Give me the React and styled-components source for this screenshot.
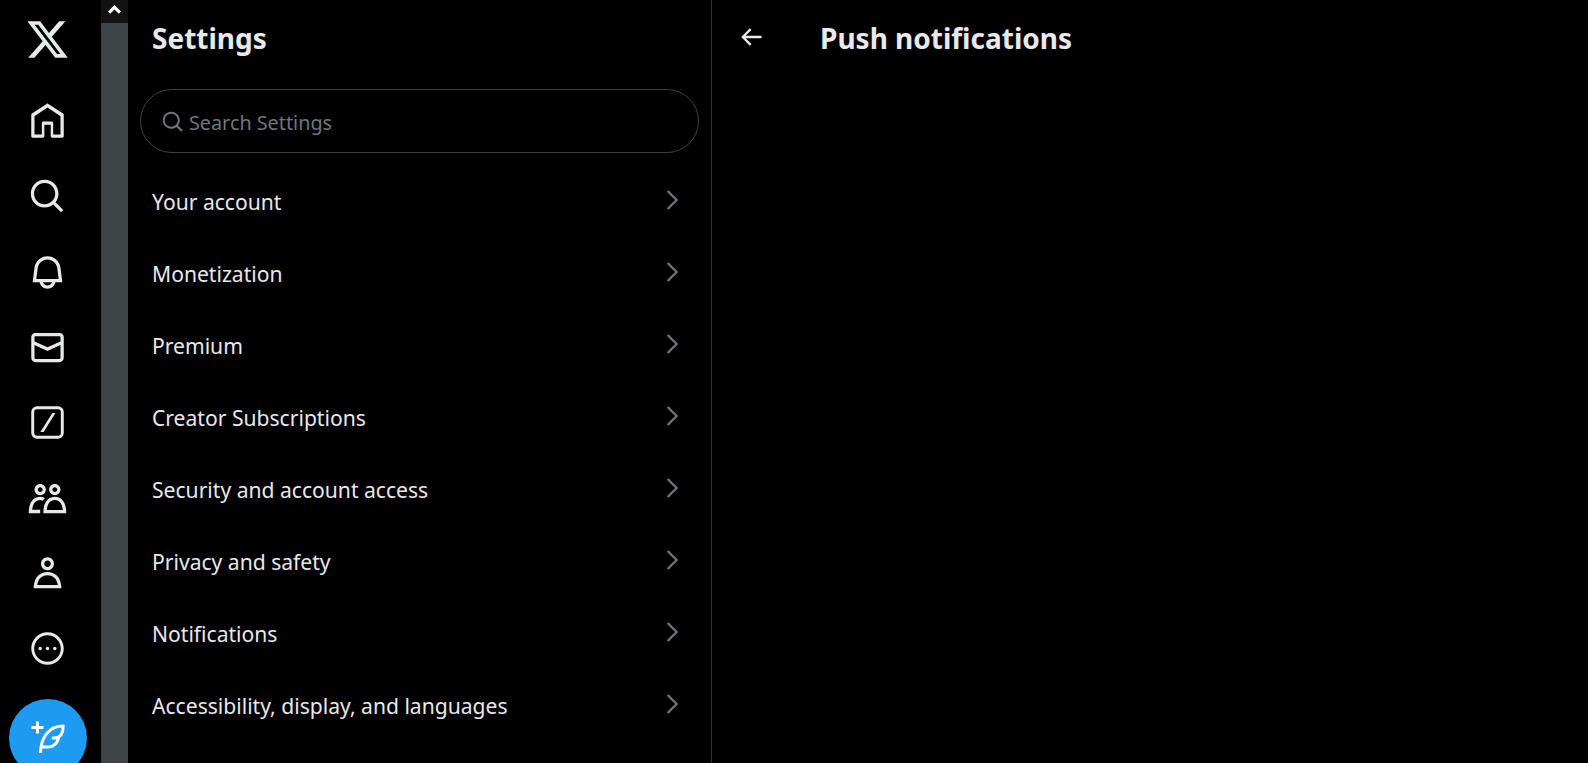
import React from "react";
import styled, { createGlobalStyle } from "styled-components";

const GlobalStyle = createGlobalStyle`
  html, body {
    margin: 0;
    height: 100%;
    background: #000;
    overflow: hidden;
  }
  #root {
    height: 100%;
  }
`;

const fontStack = `"Noto Sans", "Open Sans", "Liberation Sans", sans-serif`;

const Page = styled.div`
  display: flex;
  height: 763px;
  overflow: hidden;
  background: #000;
  color: #e7e9ea;
  font-family: ${fontStack};
`;

const Nav = styled.nav`
  flex: 0 0 95px;
  padding-right: 6px;
  display: flex;
  flex-direction: column;
  align-items: center;
`;

const LogoLink = styled.a`
  flex: 0 0 78px;
  display: flex;
  align-items: center;
  justify-content: center;
  margin-bottom: 6px;
`;

const NavLink = styled.a`
  flex: 0 0 75.3px;
  display: flex;
  align-items: center;
  justify-content: center;
`;

const PostButton = styled.a`
  flex: 0 0 78px;
  width: 78px;
  margin-top: 13px;
  border-radius: 50%;
  background: #1d9bf0;
  display: flex;
  align-items: center;
  justify-content: center;
`;

const Scrollbar = styled.div`
  flex: 0 0 27px;
  background: #3f4447;
`;

const ScrollUp = styled.div`
  height: 23px;
  padding-bottom: 4px;
  box-sizing: border-box;
  background: #121212;
  display: flex;
  align-items: center;
  justify-content: center;
`;

const SettingsColumn = styled.section`
  flex: 0 0 583px;
  border-right: 1px solid #2f3336;
`;

const Header = styled.header`
  height: 78px;
  display: flex;
  align-items: center;
  padding-left: ${(p) => p.$left || 24}px;
`;

const Title = styled.h2`
  margin: 0 0 2px;
  font-size: 28px;
  font-weight: 700;
  line-height: 76px;
`;

const SearchBox = styled.div`
  height: 64px;
  box-sizing: border-box;
  margin: 11px 12px 12px;
  border: 1px solid #3e4144;
  border-radius: 32px;
  display: flex;
  align-items: center;
  gap: 4px;
  padding: 2px 0 0 20px;
  color: #71767b;
  font-size: 19.8px;
`;

const Row = styled.a`
  height: 72px;
  display: flex;
  align-items: center;
  justify-content: space-between;
  padding: 0 25px 0 24px;
  font-size: 21.1px;
  color: #e7e9ea;
`;

const RowChevron = styled.svg`
  width: 28px;
  height: 28px;
  fill: #71767b;
  margin-top: -3px;
`;

const DetailColumn = styled.section`
  flex: 1;
`;

const BackIcon = styled.svg`
  width: 28px;
  height: 28px;
  fill: #e7e9ea;
  margin-top: -4px;
  margin-right: 55px;
`;

const Icon = styled.svg`
  width: ${(p) => p.$size || 39}px;
  height: ${(p) => p.$size || 39}px;
  fill: ${(p) => p.$fill || "#e7e9ea"};
  flex: none;
`;

const paths = {
  logo: "M18.244 2.25h3.308l-7.227 8.26 8.502 11.24H16.17l-5.214-6.817L4.99 21.75H1.68l7.73-8.835L1.254 2.25H8.08l4.713 6.231zm-1.161 17.52h1.833L7.084 4.126H5.117z",
  home: "M21.591 7.146L12.52 1.157c-.316-.21-.724-.21-1.04 0l-9.071 5.99c-.26.173-.409.456-.409.757v13.183c0 .502.418.913.929.913H9.14c.51 0 .929-.41.929-.913v-7.075h3.909v7.075c0 .502.417.913.928.913h6.165c.511 0 .929-.41.929-.913V7.904c0-.301-.158-.584-.408-.758zM20 20l-4.5.01.011-7.097c0-.502-.418-.913-.928-.913H9.44c-.511 0-.929.41-.929.913L8.5 20H4V8.773l8.011-5.342L20 8.764z",
  search: "M10.25 3.75c-3.59 0-6.5 2.91-6.5 6.5s2.91 6.5 6.5 6.5c1.795 0 3.419-.726 4.596-1.904 1.178-1.177 1.904-2.801 1.904-4.596 0-3.59-2.91-6.5-6.5-6.5zm-8.5 6.5c0-4.694 3.806-8.5 8.5-8.5s8.5 3.806 8.5 8.5c0 1.986-.682 3.815-1.824 5.262l4.781 4.781-1.414 1.414-4.781-4.781c-1.447 1.142-3.276 1.824-5.262 1.824-4.694 0-8.5-3.806-8.5-8.5z",
  bell: "M19.993 9.042C19.48 5.017 16.054 2 11.996 2s-7.49 3.021-7.999 7.051L2.866 18H7.1c.463 2.282 2.481 4 4.9 4s4.437-1.718 4.9-4h4.236l-1.143-8.958zM12 20c-1.306 0-2.417-.835-2.829-2h5.658c-.412 1.165-1.523 2-2.829 2zm-6.866-4l.847-6.698C6.364 6.272 8.941 4 11.996 4s5.627 2.268 6.013 5.295L18.864 16H5.134z",
  mail: "M1.998 5.5c0-1.381 1.119-2.5 2.5-2.5h15c1.381 0 2.5 1.119 2.5 2.5v13c0 1.381-1.119 2.5-2.5 2.5h-15c-1.381 0-2.5-1.119-2.5-2.5v-13zm2.5-.5c-.276 0-.5.224-.5.5v2.764l8 3.638 8-3.636V5.5c0-.276-.224-.5-.5-.5h-15zm15.5 5.463l-8 3.636-8-3.638V18.5c0 .276.224.5.5.5h15c.276 0 .5-.224.5-.5v-8.037z",
  slash: "M5.5 2h13A3.5 3.5 0 0 1 22 5.5v13a3.5 3.5 0 0 1-3.5 3.5h-13A3.5 3.5 0 0 1 2 18.5v-13A3.5 3.5 0 0 1 5.5 2zm0 1.8a1.7 1.7 0 0 0-1.7 1.7v13c0 .94.76 1.7 1.7 1.7h13a1.7 1.7 0 0 0 1.7-1.7v-13a1.7 1.7 0 0 0-1.7-1.7h-13zM15 6.2h1.9L9.6 17.8H7.6z",
  people: "M7.501 19.917L7.471 21H.472l.029-1.027c.184-6.618 3.736-8.977 7-8.977.963 0 1.95.212 2.87.672-.444.478-.851 1.03-1.212 1.656-.507-.204-1.054-.329-1.658-.329-2.767 0-4.57 2.223-4.938 6.004H7.56c-.023.302-.05.599-.059.917zm15.998.056L23.528 21H9.472l.029-1.027c.184-6.618 3.736-8.977 7-8.977s6.816 2.358 7 8.977zM21.437 19c-.367-3.781-2.17-6.004-4.938-6.004s-4.57 2.223-4.938 6.004h9.875zm-4.938-9c-.799 0-1.527-.279-2.116-.73-.836-.64-1.384-1.638-1.384-2.77 0-1.93 1.567-3.5 3.5-3.5s3.5 1.57 3.5 3.5c0 1.132-.548 2.13-1.384 2.77-.589.451-1.317.73-2.116.73zm-1.5-3.5c0 .827.673 1.5 1.5 1.5s1.5-.673 1.5-1.5-.673-1.5-1.5-1.5-1.5.673-1.5 1.5zM7.5 3C9.433 3 11 4.57 11 6.5S9.433 10 7.5 10 4 8.43 4 6.5 5.567 3 7.5 3zm0 2C6.673 5 6 5.673 6 6.5S6.673 8 7.5 8 9 7.327 9 6.5 8.327 5 7.5 5z",
  person: "M5.651 19h12.698c-.337-1.8-1.023-3.21-1.945-4.19C15.318 13.65 13.838 13 12 13s-3.317.65-4.404 1.81c-.922.98-1.608 2.39-1.945 4.19zm.486-5.56C7.627 11.85 9.648 11 12 11s4.373.85 5.863 2.44c1.477 1.58 2.366 3.8 2.632 6.46l.11 1.1H3.395l.11-1.1c.266-2.66 1.155-4.88 2.632-6.46zM12 4c-1.105 0-2 .9-2 2s.895 2 2 2 2-.9 2-2-.895-2-2-2zM8 6c0-2.21 1.791-4 4-4s4 1.79 4 4-1.791 4-4 4-4-1.79-4-4z",
  more: "M2 12C2 6.48 6.48 2 12 2s10 4.48 10 10-4.48 10-10 10S2 17.52 2 12zm10-8.2c-4.53 0-8.2 3.67-8.2 8.2s3.67 8.2 8.2 8.2 8.2-3.67 8.2-8.2-3.67-8.2-8.2-8.2zM7.5 13.1a1.1 1.1 0 1 0 0-2.2 1.1 1.1 0 0 0 0 2.2zm4.5 0a1.1 1.1 0 1 0 0-2.2 1.1 1.1 0 0 0 0 2.2zm4.5 0a1.1 1.1 0 1 0 0-2.2 1.1 1.1 0 0 0 0 2.2z",
  post: "M23 3c-6.62-.1-10.38 2.421-13.05 6.03C7.29 12.61 6 17.331 6 22h2c0-1.007.07-2.012.19-3H12c4.1 0 7.48-3.082 7.94-7.054C22.79 10.147 23.17 6.359 23 3zm-7 8h-1.5v2H16c.63-.016 1.2-.08 1.72-.188C16.95 15.24 14.68 17 12 17H8.55c.57-2.512 1.57-4.851 3-6.78 2.16-2.912 5.29-4.911 9.45-5.187C20.95 8.079 19.9 11 16 11zM4 9V6H1V4h3V1h2v3h3v2H6v3H4z",
  back: "M7.414 13l5.043 5.04-1.414 1.42L3.586 12l7.457-7.46 1.414 1.42L7.414 11H21v2H7.414z",
  chevron: "M14.586 12L7.543 4.96l1.414-1.42L17.414 12l-8.457 8.46-1.414-1.42L14.586 12z",
};

const navItems = ["home", "search", "bell", "mail", "slash", "people", "person", "more"];

const settingsRows = [
  "Your account",
  "Monetization",
  "Premium",
  "Creator Subscriptions",
  "Security and account access",
  "Privacy and safety",
  "Notifications",
  "Accessibility, display, and languages",
];

const App = () => {
  return (
    <>
      <GlobalStyle />
      <Page>
        <Nav>
          <LogoLink>
            <Icon viewBox="0 0 24 24" $size={45}><path d={paths.logo} /></Icon>
          </LogoLink>
          {navItems.map((name) => (
            <NavLink key={name}>
              <Icon viewBox="0 0 24 24"><path d={paths[name]} /></Icon>
            </NavLink>
          ))}
          <PostButton>
            <Icon viewBox="0 0 24 24" $size={36} $fill="#fff"><path d={paths.post} /></Icon>
          </PostButton>
        </Nav>
        <Scrollbar>
          <ScrollUp>
            <svg width="13" height="9" viewBox="0 0 13 9"><path d="M6.5 0l6.5 6.5-2.2 2.2-4.3-4.3-4.3 4.3L0 6.5z" fill="#fff" /></svg>
          </ScrollUp>
        </Scrollbar>
        <SettingsColumn>
          <Header>
            <Title>Settings</Title>
          </Header>
          <SearchBox>
            <Icon viewBox="0 0 24 24" $size={24} $fill="#71767b"><path d={paths.search} /></Icon>
            Search Settings
          </SearchBox>
          {settingsRows.map((label) => (
            <Row key={label}>
              {label}
              <RowChevron viewBox="0 0 24 24"><path d={paths.chevron} /></RowChevron>
            </Row>
          ))}
        </SettingsColumn>
        <DetailColumn>
          <Header $left={25}>
            <BackIcon viewBox="0 0 24 24"><path d={paths.back} /></BackIcon>
            <Title>Push notifications</Title>
          </Header>
        </DetailColumn>
      </Page>
    </>
  );
};

export default App;
